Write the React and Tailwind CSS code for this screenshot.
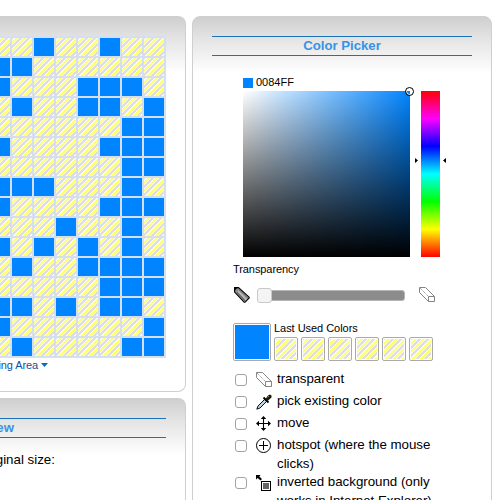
import React from "react";

const ROWS = [
  "00100100", "11000000", "10001110", "01001101",
  "00000011", "10000111", "00000011", "11100010",
  "10000111", "00010010", "10101010", "01001111",
  "00000111", "11010110", "10000001", "01000011",
];

const HATCH =
  "bg-[repeating-linear-gradient(135deg,#dedede_0px,#dedede_1.1px,#fdfdf8_1.5px,#fdfdf8_2.1px,#ffff70_2.4px,#ffff70_4.2px,#fdfdf8_4.5px,#fdfdf8_4.9px,#dedede_5.3px,#dedede_6px)]";

const PANEL =
  "border border-[#cdd0cf] bg-[linear-gradient(to_bottom,#cfcfcf_0px,#e4e4e4_22px,#ffffff_56px)]";

function Title({ children, className = "" }) {
  return (
    <div className={`h-5 border-y border-[#1a73b8] text-center text-[13.2px] leading-[18px] font-bold text-[#3892e6] ${className}`}>
      {children}
    </div>
  );
}

function Eraser() {
  return (
    <svg className="block" width="17" height="16" viewBox="0 0 17 16" fill="none" stroke="#858585">
      <path d="M.5 5.5V.5H6.5L15.5 9.5V14.5H9.5L.5 5.5" />
      <path d="M9.5 14.5V9.5H15.5" />
      <path d="M1 1L9.5 9.5" strokeDasharray="1 1" />
    </svg>
  );
}

function Pencil() {
  return (
    <svg className="block" width="16" height="16" viewBox="0 0 16 16">
      <path d="M.6 .6H4.5L15.2 10.2V11L11 15.3H10.2L.6 5Z" fill="#8a8a8a" stroke="#000" strokeWidth="1.1" />
      <path d="M5 3L13.6 11" stroke="#7a7a7a" strokeWidth="1.2" />
      <path d="M4 4L12.5 12.5" stroke="#b8b8b8" strokeWidth="1.8" />
      <path d="M3 5.5L11 14" stroke="#6a6a6a" strokeWidth="1.2" />
      <path d="M.3 .3H4L.3 4Z" fill="#000" />
    </svg>
  );
}

function Dropper() {
  return (
    <svg className="block" width="17" height="16" viewBox="0 0 17 16">
      <path d="M.8 15.2L2 12L8.5 5.5L10.5 7.5L4 14Z" fill="#b9d5e6" stroke="#111" />
      <path d="M7.5 3.5L12.5 8.5" stroke="#000" strokeWidth="1.8" />
      <path d="M9.5 5L12 1.5L14 .6L15.5 1.5V3.5L11.5 7Z" fill="#1c190d" />
      <path d="M11.5 3.5L13 2" stroke="#94844d" />
    </svg>
  );
}

function Move() {
  return (
    <svg className="block" width="16" height="16" viewBox="0 0 16 16">
      <path d="M7.5 1V14M1 7.5H14" stroke="#000" strokeWidth="1.1" />
      <path d="M7.5 0L10.2 3H4.8ZM7.5 15L10.2 12H4.8ZM0 7.5L3 4.8V10.2ZM15 7.5L12 4.8V10.2Z" />
    </svg>
  );
}

function Hotspot() {
  return (
    <svg className="block" width="16" height="16" viewBox="0 0 16 16" fill="none" stroke="#000">
      <circle cx="7.5" cy="7.5" r="7" />
      <path d="M7.5 3V12M3 7.5H12" />
    </svg>
  );
}

function Inverted() {
  return (
    <svg className="block" width="16" height="17" viewBox="0 0 16 17">
      <path d="M0 0H4.5L3.3 1.5L6 4L4.5 5.5L1.7 3L0 4.5Z" />
      <rect x="5.5" y="6.5" width="9" height="9" fill="#fff" stroke="#000" />
      <rect x="7" y="8" width="6" height="6" fill="#666" />
    </svg>
  );
}

function Option({ icon, children }) {
  return (
    <div className="flex min-h-[22px] items-start">
      <span className="mt-[4px] h-3 w-3 shrink-0 rounded-[3px] border border-[#a3a3a3] bg-white" />
      <span className="mt-[2px] ml-[9px] w-[21px] shrink-0">{icon}</span>
      <span className="whitespace-nowrap">{children}</span>
    </div>
  );
}

export default function App() {
  return (
    <div className="flex h-[500px] w-[500px] gap-[6px] overflow-hidden bg-white pt-4 font-['Liberation_Sans',Arial,sans-serif] text-black">
      <div className="flex w-[186px] shrink-0 flex-col gap-[6px]">
        <section className={`h-[376px] shrink-0 rounded-r-lg border-l-0 pt-[19px] ${PANEL}`}>
          <div className="w-[166px] overflow-hidden bg-[#d5e0ee] pt-[2px]">
            {ROWS.map((row, r) => (
              <div key={r} className="-ml-[10px] flex h-5 gap-[2px]">
                {row.split("").map((cell, c) => (
                  <span key={c} className={`h-[18px] w-5 shrink-0 ${cell === "1" ? "bg-[#0084ff]" : HATCH}`} />
                ))}
              </div>
            ))}
          </div>
          <div className="flex h-[14px] items-center text-[11px] tracking-[-0.1px] text-[#114fa2]">
            <span className="flex w-[38px] justify-end whitespace-nowrap">ing Area</span>
            <svg className="ml-[3px]" width="7" height="5" viewBox="0 0 7 5"><path d="M0 0H7L3.5 4Z" fill="#0869bd" /></svg>
          </div>
        </section>
        <section className={`h-[140px] shrink-0 rounded-tr-lg border-l-0 pt-[19px] ${PANEL}`}>
          <div className="flex w-[166px] justify-end overflow-hidden">
            <Title className="w-[354px] shrink-0">Preview</Title>
          </div>
          <div className="mt-[13px] w-[55px] text-[13.33px] leading-[18px]">
            <div className="flex justify-end whitespace-nowrap">ginal size:</div>
          </div>
        </section>
      </div>

      <section className={`h-[520px] w-[300px] shrink-0 rounded-t-lg px-[19px] pt-[19px] ${PANEL}`}>
        <Title>Color Picker</Title>
        <div className="mt-[19px] ml-[31px] flex h-[14px] items-center text-[11px]">
          <span className="mt-[2px] mr-[3px] h-[10px] w-[10px] bg-[#0084ff]" />
          0084FF
        </div>
        <div className="mt-[2px] ml-[31px] flex h-[166px]">
          <div className="relative w-[167px] bg-[linear-gradient(to_top,#000,transparent),linear-gradient(to_right,#fff,#0084ff)]">
            <svg className="absolute -top-[4px] left-[162px]" width="9" height="9" viewBox="0 0 9 9" fill="none">
              <circle cx="4.5" cy="4.5" r="3" stroke="#fff" />
              <circle cx="4.5" cy="4.5" r="4" stroke="#000" />
            </svg>
          </div>
          <div className="relative ml-[11px] w-[19px] bg-[linear-gradient(to_bottom,#f00,#f0f,#00f,#0ff,#0f0,#ff0,#f00)]">
            <svg className="absolute top-[67px] -left-[6px] max-w-none" width="31" height="5" viewBox="0 0 31 5">
              <path d="M0 0L3 2.5L0 5ZM31 0L28 2.5L31 5Z" />
            </svg>
          </div>
        </div>
        <div className="ml-[21px]">
          <div className="mt-[5px] text-[11px] leading-[14px] tracking-[-0.08px]">Transparency</div>
          <div className="mt-[11px] flex h-4 items-center">
            <span className="ml-[1px]"><Pencil /></span>
            <span className="ml-[7px] flex h-[15px] w-[148px] items-center">
              <span className="z-10 h-[15px] w-[15px] shrink-0 rounded-[3px] border border-[#c8c8c8] bg-[#f4f4f4]" />
              <span className="-ml-[3px] h-[11px] flex-1 rounded-[3px] border border-[#b5b5b5] bg-[#8c8c8c]" />
            </span>
            <span className="ml-[14px]"><Eraser /></span>
          </div>
          <div className="mt-[20px] flex h-[38px]">
            <span className="h-[38px] w-[38px] rounded-[2px] border border-[#aaa] bg-white p-px">
              <span className="block h-full w-full bg-[#0084ff]" />
            </span>
            <div className="ml-[3px]">
              <div className="h-[14px] text-[11px] leading-[11px] tracking-[-0.04px]">Last Used Colors</div>
              <div className="flex gap-[3px]">
                {[0, 1, 2, 3, 4, 5].map((n) => (
                  <span key={n} className="h-6 w-6 rounded-[2px] border border-[#aaa] bg-white p-px">
                    <span className={`block h-full w-full ${HATCH}`} />
                  </span>
                ))}
              </div>
            </div>
          </div>
          <div className="mt-[9px] ml-[2px] flex flex-col text-[13.33px] leading-[18.5px] tracking-[-0.03px]">
            <Option icon={<Eraser />}>transparent</Option>
            <Option icon={<Dropper />}>pick existing color</Option>
            <Option icon={<Move />}>move</Option>
            <Option icon={<Hotspot />}>hotspot (where the mouse<br />clicks)</Option>
            <Option icon={<Inverted />}>inverted background (only<br />works in Internet Explorer)</Option>
          </div>
        </div>
      </section>
    </div>
  );
}
